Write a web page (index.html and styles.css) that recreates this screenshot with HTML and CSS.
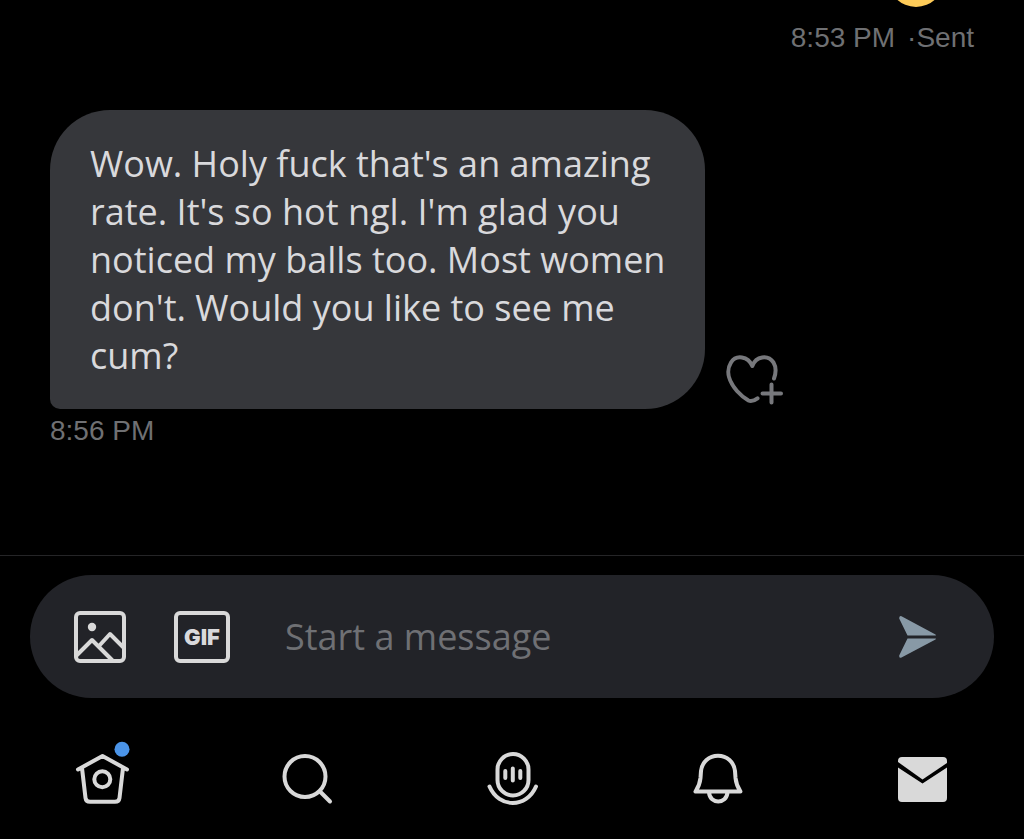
FILE: index.html
```
<!DOCTYPE html>
<html lang="en">
<head>
  <meta charset="UTF-8" />
  <meta name="viewport" content="width=device-width, initial-scale=1.0"/>
  <title>Messages</title>
  <link rel="stylesheet" href="styles.css">
</head>
<body>

  <main class="messages">
    <div class="sent">
      <div class="emoji"></div>
      <p class="status"><span>8:53 PM</span><span>·Sent</span></p>
    </div>

    <div class="received">
      <p class="bubble">Wow. Holy fuck that's an amazing rate. It's so hot ngl. I'm glad you noticed my balls too. Most women don't. Would you like to see me cum?</p>
      <button class="react" aria-label="Add reaction">
        <svg width="58" height="52" viewBox="25 14 58 52">
          <path d="M74 38.500C76 33 76.200 27 73.500 22.500C68 14.500 56 16 52.300 26C48 16 36 14.500 31 22.500C25 32 30 43 37 51C41 55.500 45 58.500 48.500 60.500C51.500 62 54.500 60.500 57.500 58.300M71.500 44.500V62.500M62.500 53.500H81"/>
        </svg>
      </button>
    </div>
    <p class="time">8:56 PM</p>
  </main>

  <form class="composer">
    <button type="button" class="tool" aria-label="Add photo">
      <svg width="52" height="52" viewBox="0 0 52 52">
        <rect x="2" y="2" width="48" height="48" rx="4"/>
        <path d="M2 45L18 29L38 49M25 35L36 23L50 37"/>
        <circle class="solid" cx="18" cy="16" r="4.200"/>
      </svg>
    </button>
    <button type="button" class="tool gif" aria-label="Add GIF">GIF</button>
    <input type="text" placeholder="Start a message" aria-label="Start a message" />
    <button type="submit" class="send" aria-label="Send">
      <svg width="40" height="44" viewBox="0 0 40 44">
        <path d="M3.500 1.200L37.500 19.600Q38.500 20.600 37.500 20.600H9.500L1.200 3.600Q1 .3 3.500 1.200ZM9.500 23.400H37.500Q38.500 23.400 37.500 24.400L3.500 42.600Q.8 43.600 1.200 40.500Z"/>
      </svg>
    </button>
  </form>

  <nav class="tabs">
    <a href="#" aria-label="Home">
      <svg viewBox="10 17 64 64">
        <path d="M18 39.500L42.500 26L67 39.500M22 38L25.500 68Q26 71.800 30 71.800H55Q59 71.800 59.500 68L63 38"/>
        <circle cx="42.300" cy="49.300" r="8"/>
        <circle class="dot" cx="62" cy="19.300" r="7.500"/>
      </svg>
    </a>
    <a href="#" aria-label="Search">
      <svg viewBox="5 17 64 64">
        <circle cx="35" cy="46.500" r="20.500"/>
        <path d="M50 61.500L60 71.500"/>
      </svg>
    </a>
    <a href="#" aria-label="Spaces">
      <svg viewBox="10 17 64 64">
        <rect x="27.500" y="24" width="31" height="41.500" rx="15.500"/>
        <path d="M19.500 56.500C29 78.500 56.500 78.500 66 56.500M35.300 41V48M42.800 38.500V50.500M50.300 41V48"/>
      </svg>
    </a>
    <a href="#" aria-label="Notifications">
      <svg viewBox="10 17 64 64">
        <path d="M20.500 61.500H65.500C62.500 57 61 53 60.500 48L60 41C59 32 52 25.700 43 25.700C34 25.700 27 32 26 41L25.500 48C25 53 23.500 57 20.500 61.500ZM34 62.500C35 74.500 51.500 74.500 52.500 62.500"/>
      </svg>
    </a>
    <a href="#" aria-label="Messages">
      <svg viewBox="10 17 64 64">
        <path class="solid" d="M18 32V31Q18 27 22 27H63Q67 27 67 31V33L42.500 49.500Z"/>
        <path class="solid" d="M18 37.500L42.500 53.500L67 37.500V68Q67 72 63 72H22Q18 72 18 68Z"/>
      </svg>
    </a>
  </nav>

</body>
</html>
```
FILE: styles.css
```
* {
  box-sizing: border-box;
  margin: 0;
  padding: 0;
}

body {
  min-height: 100vh;
  display: flex;
  flex-direction: column;
  background-color: #000;
  color: #d9d9dc;
  font-family: "Open Sans", sans-serif;
  overflow-x: hidden;
}

button {
  background: none;
  border: none;
  color: inherit;
  cursor: pointer;
}

svg {
  display: block;
  fill: none;
  stroke: #d9d9d9;
  stroke-width: 4;
  stroke-linecap: round;
  stroke-linejoin: round;
}

.messages {
  flex: 1;
  padding: 0 50px;
  border-bottom: 1px solid #252527;
  overflow: hidden;
}

.sent {
  display: flex;
  flex-direction: column;
  align-items: flex-end;
}

.emoji {
  width: 56px;
  height: 56px;
  margin: -49px 30px 0 0;
  border-radius: 50%;
  background-color: #fecb58;
}

.status,
.time {
  font-family: "Liberation Sans", Arial, sans-serif;
  font-size: 28px;
  line-height: 32px;
  color: #6f7073;
}

.status {
  display: flex;
  gap: 12px;
  margin-top: 15px;
}

.received {
  display: flex;
  align-items: flex-end;
  gap: 20px;
  margin-top: 56px;
}

.bubble {
  max-width: 655px;
  padding: 30px 28px 29px 40px;
  border-radius: 60px 60px 60px 10px;
  background-color: #36373b;
  font-size: 36px;
  line-height: 48px;
}

.react {
  margin-bottom: 3px;
}

.react svg {
  stroke: #77787c;
}

.time {
  margin-top: 6px;
}

.composer {
  display: flex;
  align-items: center;
  height: 123px;
  margin: 19px 30px 0;
  padding: 0 56px 0 44px;
  border-radius: 62px;
  background-color: #222328;
}

.tool {
  margin-right: 48px;
}

.gif {
  width: 56px;
  height: 52px;
  margin-right: 55px;
  border: 4px solid #d9d9d9;
  border-radius: 6px;
  font-family: Inter, sans-serif;
  font-size: 22px;
  font-weight: 900;
}

.composer input {
  flex: 1;
  min-width: 0;
  height: 60px;
  border: none;
  outline: none;
  background: none;
  color: #d9d9dc;
  font-family: inherit;
  font-size: 36px;
}

.composer input::placeholder {
  color: #6f7074;
}

.send svg {
  fill: #8899a6;
  stroke: none;
}

.tabs {
  display: grid;
  grid-template-columns: repeat(5, 1fr);
  justify-items: center;
  padding: 49px 0 28px;
}

.tabs svg {
  width: 64px;
  height: 64px;
  overflow: visible;
}

svg .solid {
  fill: #d9d9d9;
  stroke: none;
}

.tabs .dot {
  fill: #4b94e8;
  stroke: none;
}
```
